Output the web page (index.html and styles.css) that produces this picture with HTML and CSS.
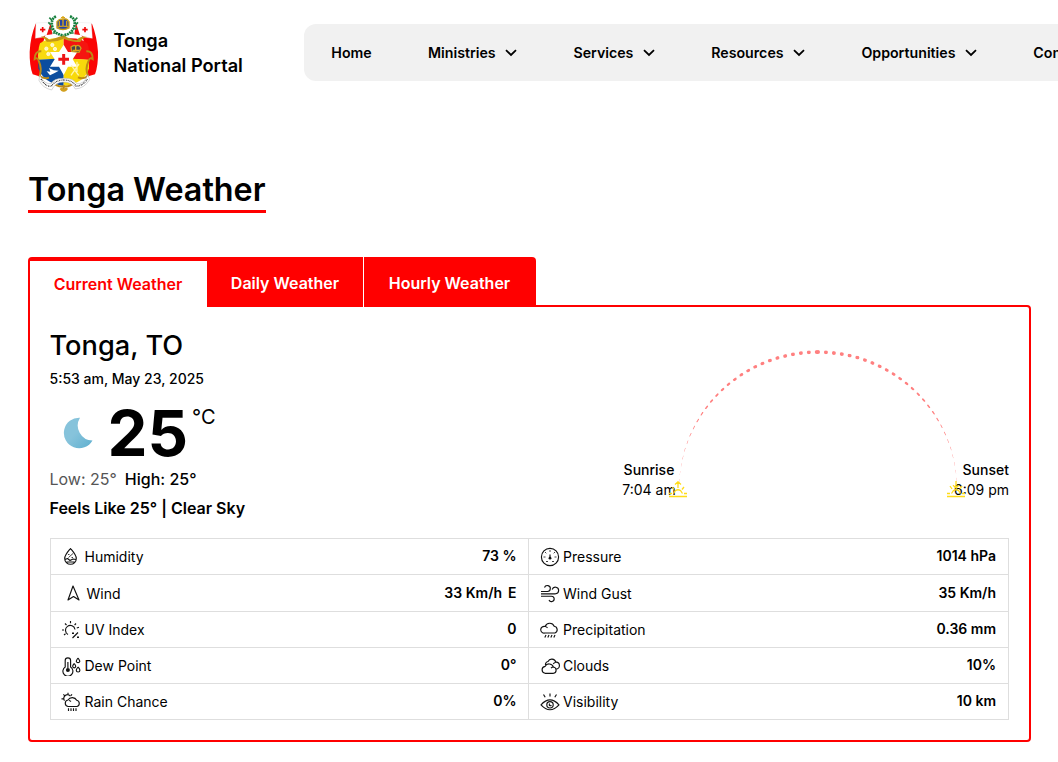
FILE: index.html
```html
<!DOCTYPE html>
<html lang="en">
<head>
<meta charset="utf-8">
<title>Tonga Weather</title>
<link rel="stylesheet" href="styles.css">
</head>
<body>
<header class="header">
  <a class="brand">
    <svg class="emblem" viewBox="24 24 216 264">
      <path d="M47 56L87 54L70 110L55 150L62 215L38 208Q28 180 29 140Q31 95 47 56Z" fill="#fa0505"/>
      <path d="M216 56L172 54L192 110L205 150L200 215L225 208Q235 180 234 140Q231 95 216 56Z" fill="#fa0505"/>
      <path d="M48 54L88 52L92 82L66 97L46 100Z" fill="#fff" stroke="#ddd"/>
      <path d="M214 54L172 52L168 82L194 97L217 100Z" fill="#fff" stroke="#ddd"/>
      <path d="M60 74H76M68 66V82M187 74H203M195 66V82" stroke="#f00808" stroke-width="5"/>
      <path d="M80 90L92 54L97 88ZM180 90L168 54L163 88Z" fill="#f01010"/>
      <path d="M60 115Q85 95 131 101V160L55 165Q53 135 60 115Z" fill="#f8da10"/>
      <path d="M131 101Q180 95 202 115Q210 135 207 165L131 160Z" fill="#f51510"/>
      <path d="M55 164L131 160V243Q70 235 55 190Z" fill="#0b4d9f"/>
      <path d="M207 164L131 160V243Q195 235 207 190Z" fill="#f8d90b"/>
      <path d="M131 119L144 141H172L158 163L172 185H144L131 210L117 185H90L104 163L90 141H117Z" fill="#fff"/>
      <path d="M115 163H147M131 147V179" stroke="#ed1517" stroke-width="9"/>
      <path d="M62 95Q79 92 88 105Q112 98 131 91Q151 104 170 106Q181 91 202 96Q186 99 181 111Q153 111 131 101Q107 113 80 110Q76 100 62 95Z" fill="#c49617"/>
      <g fill="none" stroke="#bd8b15" stroke-width="6">
        <path d="M64 139Q44 138 44 162Q53 155 57 170Q66 190 59 213Q72 223 87 218"/>
        <path d="M199 139Q219 138 218 162Q209 155 205 170Q195 190 204 213Q190 224 174 217"/>
        <path d="M97 231Q112 247 131 244Q149 247 165 231M131 240V255"/>
      </g>
      <g fill="none" stroke="#16813e" stroke-width="8" stroke-dasharray="6 2">
        <path d="M108 34Q91 42 97 67Q105 88 130 91"/>
        <path d="M150 34Q170 42 162 67Q153 88 130 91"/>
      </g>
      <path d="M95 45L88 38M92 59L85 52M95 73L88 70M106 84L98 84M165 45L172 38M167 59L174 52M164 73L171 70M153 84L161 84" stroke="#218344" stroke-width="5"/>
      <path d="M111 69V50Q120 39 128 44Q138 37 147 50V69Q129 78 111 69Z" fill="#2744a5" stroke="#cca017" stroke-width="4"/>
      <path d="M111 67Q129 60 147 67M129 33V64M123 38H135M118 48V64M140 48V64" fill="none" stroke="#d9a618" stroke-width="4"/>
      <path d="M155 139L153 126Q162 119 168 123Q177 117 183 130L177 142Z" fill="#48434d" stroke="#cda01d" stroke-width="4"/>
      <path d="M158 136H178M167 122V137" stroke="#e4ab17" stroke-width="4"/>
      <g fill="#fff6ba" stroke="#fff" stroke-width="2"><circle cx="97" cy="120" r="5"/><circle cx="79" cy="131" r="5"/><circle cx="105" cy="132" r="5"/><circle cx="85" cy="147" r="5"/></g>
      <path d="M80 199L91 200L87 189L101 196L116 197L104 204L90 211Z" fill="#fff"/>
      <path d="M154 181L176 211M177 177L153 211M171 170V201" stroke="#fff5ab" stroke-width="4"/>
      <path d="M59 211Q75 240 94 236Q100 220 131 220Q160 219 170 236Q190 240 204 210L209 224Q193 250 166 252Q157 231 131 231Q106 231 95 255Q68 249 57 226Z" fill="#fff" stroke="#aaa" stroke-width="1.5"/>
      <path d="M63 222Q76 245 94 244Q106 225 131 225Q157 225 168 243Q188 244 203 221" fill="none" stroke="#343434" stroke-width="4" stroke-dasharray="3 2 2 3"/>
      <path d="M119 252Q126 243 131 252Q139 243 144 252Q137 262 131 260Q125 262 119 252Z" fill="#d2a01f"/>
    </svg>
    <span class="brand-name">Tonga<br>National Portal</span>
  </a>
  <nav class="nav">
    <a>Home</a>
    <a>Ministries <svg viewBox="0 0 12 8"><path d="M1 1.2L6 6L11 1.2"/></svg></a>
    <a>Services <svg viewBox="0 0 12 8"><path d="M1 1.2L6 6L11 1.2"/></svg></a>
    <a>Resources <svg viewBox="0 0 12 8"><path d="M1 1.2L6 6L11 1.2"/></svg></a>
    <a>Opportunities <svg viewBox="0 0 12 8"><path d="M1 1.2L6 6L11 1.2"/></svg></a>
    <a>Contact</a>
  </nav>
</header>
<main class="main">
  <h1 class="title">Tonga Weather</h1>
  <div class="tabs">
    <div class="tab tab-active">Current Weather</div>
    <div class="tab tab-daily">Daily Weather</div>
    <div class="tab tab-hourly">Hourly Weather</div>
  </div>
  <section class="panel">
    <div class="summary">
      <div class="current">
        <h2 class="city">Tonga, TO</h2>
        <div class="date">5:53 am, May 23, 2025</div>
        <div class="temp-row">
          <svg class="moon" viewBox="0 0 30 32"><defs><linearGradient id="moon" x1="0" y1="0" x2="1" y2="1"><stop offset=".45" stop-color="#86c3db"/><stop offset="1" stop-color="#5eafcf"/></linearGradient></defs><path d="M17 .7A15.3 15.3 0 1 0 29.5 23.5A15 15 0 0 1 17 .7Z" fill="url(#moon)"/></svg>
          <span class="temp">25</span><span class="unit">°C</span>
        </div>
        <div class="range"><span class="low">Low: 25°</span><span class="high">High: 25°</span></div>
        <div class="feels">Feels Like 25° | Clear Sky</div>
      </div>
      <div class="sun">
        <div class="sun-label sunrise">Sunrise<br>7:04 am</div>
        <div class="arc"></div>
        <div class="sun-label sunset"><div>Sunset</div><div>6:09 pm</div></div>
        <svg class="sun-icon icon-rise" viewBox="0 0 18 17"><path d="M0 15.5H18M0 12.5H3M15 12.5H18M4.5 12.5L6.5 9.5Q9 8 11.5 9.5L13.5 12.5M9 7V1M6 3.5L9 .8L12 3.5M3.5 6L5 8.5M15 6L13 8.5"/></svg>
        <svg class="sun-icon icon-set" viewBox="0 0 18 17"><path d="M0 15.5H18M0 12.5H3M15 12.5H18M4.5 12.5L6.5 9.5Q9 8 11.5 9.5L13.5 12.5M9 0V7M6 4.3L9 7L12 4.3M3 5L5 8M15 5L13 8"/></svg>
      </div>
    </div>
    <div class="metrics">
      <div class="metric"><svg class="icon" viewBox="0 0 20 20"><path d="M9.5 1.5C7 4.5 3.7 8 3.7 11.5A5.8 5.8 0 0 0 15.3 11.5C15.3 8 12 4.5 9.5 1.5ZM4 12.5L6.5 11.5L9 13.5L12 12L15 12.5M5.5 15H13.5"/><path class="fine" d="M7 7.5H8.5M10.5 10.5H12M7.5 10.5L12 6.5"/></svg><span class="name">Humidity</span><b>73 %</b></div>
      <div class="metric wind"><svg class="icon" viewBox="0 0 20 20"><path d="M10 3L16 17L10.5 13.5L5 17L10 3Z"/></svg><span class="name">Wind</span><b>33 Km/h<span class="direction">E</span></b></div>
      <div class="metric"><svg class="icon" viewBox="0 0 20 20"><path d="M7 14.5A4.8 4.8 0 1 1 14 9.5M9.5 1V3.2M4 3.5L5.5 5M15 3.5L13.6 5M1 10H3M3 15L4.5 13.8M15.8 8L18 7.3M11.5 18L17 12.5"/><path class="solid" d="M11 12.5H13V14H11ZM16 16.5H18V18H16Z"/></svg><span class="name">UV Index</span><b>0</b></div>
      <div class="metric"><svg class="icon" viewBox="0 0 20 20"><path d="M4.2 11V4.5A2.7 2.7 0 0 1 9.6 4.5V11A5 5 0 1 1 4.2 11ZM6.9 6V12M17 2C15.8 3.7 15.3 4.5 15.3 5.3A1.8 1.8 0 0 0 18.8 5.3C18.8 4.5 18 3.5 17 2M13.2 7.5C12.2 8.9 11.7 9.5 11.7 10.3A1.5 1.5 0 0 0 14.7 10.3C14.7 9.5 14.2 8.8 13.2 7.5M17 11C15.8 12.5 15.3 13.2 15.3 14.2A1.8 1.8 0 0 0 18.9 14.2C18.9 13.2 18 12 17 11"/><circle class="solid" cx="6.9" cy="14" r="2"/></svg><span class="name">Dew Point</span><b>0°</b></div>
      <div class="metric"><svg class="icon" viewBox="0 0 20 20"><path d="M7 14.5A3.3 3.3 0 0 1 7 8A5 5 0 0 1 15.7 8.3A3.2 3.2 0 0 1 16 14.5ZM8 8.5A3.5 3.5 0 0 1 10 9.5M3.5 8.7A3.5 3.5 0 0 1 9.5 4.2M7 .8V2.5M2.4 2.4L3.8 3.8M11 2.4L10 3.5M.5 6.8H2.3M7.5 16.3V19M10 16.3V19M12.5 16.3V19M15 16.3V19"/></svg><span class="name">Rain Chance</span><b>0%</b></div>
      <div class="metric right"><svg class="icon" viewBox="0 0 20 20"><circle cx="10" cy="10" r="8.6"/><path class="fine" d="M10 3V5M3.5 10H5.5M14.5 10H16.5M5 5L6.3 6.3M15 5L13.7 6.3M6 14.5H8M12 14.5H14"/><path d="M10 7.5V11"/><circle class="solid" cx="10" cy="11.2" r="1.4"/></svg><span class="name">Pressure</span><b>1014 hPa</b></div>
      <div class="metric right"><svg class="icon" viewBox="0 0 20 20"><path d="M1 8.5H7.5A3 3 0 1 0 4.5 4.5M1 10.8H15.5A3.3 3.3 0 1 0 12.2 6.5M1 13.2H11.5A2.7 2.7 0 1 1 9 17"/></svg><span class="name">Wind Gust</span><b>35 Km/h</b></div>
      <div class="metric right"><svg class="icon" viewBox="0 0 20 20"><path d="M5 13A3.4 3.4 0 1 1 5.2 6.5A4.8 4.8 0 0 1 14.2 6.3A3.5 3.5 0 0 1 15 13ZM5 6.5A3.5 3.5 0 0 1 7.5 7.8M6 15L4.8 17.5M9 15L7.8 17.5M12 15L10.8 17.5M15 15L13.8 17.5"/></svg><span class="name">Precipitation</span><b>0.36 mm</b></div>
      <div class="metric right"><svg class="icon" viewBox="0 0 20 20"><path d="M5 17.3A3.5 3.5 0 0 1 5 10.4A4.6 4.6 0 0 1 13.4 11A3.2 3.2 0 0 1 13.5 17.3ZM11 12.2A3 3 0 0 1 13.4 11M5.5 9A3 3 0 0 1 8 5.5A4.2 4.2 0 0 1 15.8 6.2A3.4 3.4 0 0 1 16.2 13M13.3 8A3 3 0 0 1 15.8 6.2"/></svg><span class="name">Clouds</span><b>10%</b></div>
      <div class="metric right"><svg class="icon" viewBox="0 0 20 20"><path d="M1 12.8Q10 3 19 12.8Q10 22.6 1 12.8Z"/><circle cx="10" cy="12.8" r="3.2"/><path d="M10 11.8A1 1 0 1 0 11.2 13M10 1.5V4.5M3.5 2.5L5.2 5.3M16.5 2.5L14.8 5.3"/></svg><span class="name">Visibility</span><b>10 km</b></div>
    </div>
  </section>
</main>
</body>
</html>
```

FILE: styles.css
```css
* { box-sizing: border-box; }
body { margin: 0; height: 762px; overflow: hidden; background: #fff; color: #000; font-family: Inter, sans-serif; }
.header { display: flex; height: 105px; padding-left: 28px; overflow: hidden; }
.brand { display: flex; width: 276px; flex: none; }
.emblem { width: 72px; height: 88px; margin-top: 13px; }
.brand-name { margin: 28px 0 0 13.5px; font-size: 18.2px; line-height: 25px; font-weight: 600; white-space: nowrap; }
.nav { display: flex; align-items: center; flex: none; gap: 56.3px; width: 900px; height: 57px; margin-top: 24px; padding-left: 27.3px; border-radius: 12px; background: #f1f1f1; font-size: 14.2px; font-weight: 600; white-space: nowrap; }
.nav a { display: flex; align-items: center; gap: 9.5px; }
.nav svg { width: 12px; height: 8px; fill: none; stroke: #000; stroke-width: 1.8; }
.main { padding: 63px 27px 0 28px; }
.title { width: 238px; margin: 0; height: 45px; border-bottom: 3px solid #f00; font-size: 32.3px; line-height: 44px; font-weight: 600; white-space: nowrap; }
.tabs { position: relative; display: flex; height: 50px; margin-top: 44px; color: #fff; font-size: 16px; line-height: 52px; font-weight: 600; white-space: nowrap; }
.tab { text-align: center; background: #f00; }
.tab-active { width: 179px; padding-right: 1px; border-top: 4px solid #f00; border-left: 2px solid #f00; border-radius: 4px 0 0; background: #fff; color: #f00; line-height: 47px; }
.tab-daily { width: 157px; border-right: 1px solid #fff; }
.tab-hourly { width: 172px; padding-right: 1px; border-radius: 0 4px 0 0; }
.panel { height: 437px; margin-top: -2px; padding: 22px 20px 0; border: 2px solid #f00; border-radius: 0 4px 4px 4px; }
.summary { display: flex; justify-content: space-between; height: 209px; }
.current { margin-left: -0.5px; }
.city { margin: 0; font-size: 27.2px; line-height: 34px; font-weight: 500; }
.date { margin-top: 7px; font-size: 14px; line-height: 18px; font-weight: 500; }
.temp-row { display: flex; height: 74px; padding: 10px 0 0 13.5px; }
.moon { width: 30px; height: 32px; margin-top: 19px; }
.temp { margin-left: 14.5px; font-size: 63.5px; line-height: 70px; font-weight: 700; }
.unit { margin-left: 4px; font-size: 20px; line-height: 38px; }
.range { height: 34px; font-size: 16px; line-height: 34px; white-space: pre; }
.low { color: #555; }
.high { margin-left: 8px; font-weight: 500; }
.feels { font-size: 16px; line-height: 24px; font-weight: 600; }
.sun { position: relative; display: flex; width: 387px; }
.arc { flex: none; width: 278px; height: 139px; margin: 21px 0 0 3px; border-top: 4px dotted #ff8080; border-radius: 139px 139px 0 0; }
.sun-label { flex: none; width: 54px; height: 40px; margin-top: 131px; font-size: 14px; line-height: 20px; white-space: nowrap; }
.sunrise { text-align: center; }
.sunrise::first-line { font-weight: 500; }
.sunset { display: flex; flex-direction: column; align-items: flex-end; margin-left: -2px; }
.sunset div:first-child { font-weight: 500; }
.sun-icon { position: absolute; top: 152px; width: 18px; height: 17px; fill: none; stroke: #ffdc18; stroke-width: 1.3; }
.icon-rise { left: 47px; }
.icon-set { left: 325px; }
.metrics { display: grid; grid-template-columns: 478px 480px; grid-template-rows: 36px 37px 36px 36px 36px; grid-auto-flow: column; width: 959px; height: 182px; border: 1px solid #dedede; border-width: 1px 0 0 1px; }
.metric { display: flex; align-items: center; padding: 0 11.5px 0 10px; border: 1px solid #dedede; border-width: 0 1px 1px 0; font-size: 14px; }
.metric.right { padding: 0 12px 0 11px; }
.icon { width: 20px; height: 20px; margin-right: 3.5px; fill: none; stroke: #111; stroke-width: 1.15; stroke-linejoin: round; }
.right .icon { margin-right: 3px; }
.icon .solid { fill: #111; stroke: none; }
.icon .fine { stroke-width: .8; }
.wind .icon { margin: 0 3.5px 0 2px; }
.metric b { margin-left: auto; padding-bottom: 2px; font-weight: 600; }
.direction { margin-left: 6px; }
```
